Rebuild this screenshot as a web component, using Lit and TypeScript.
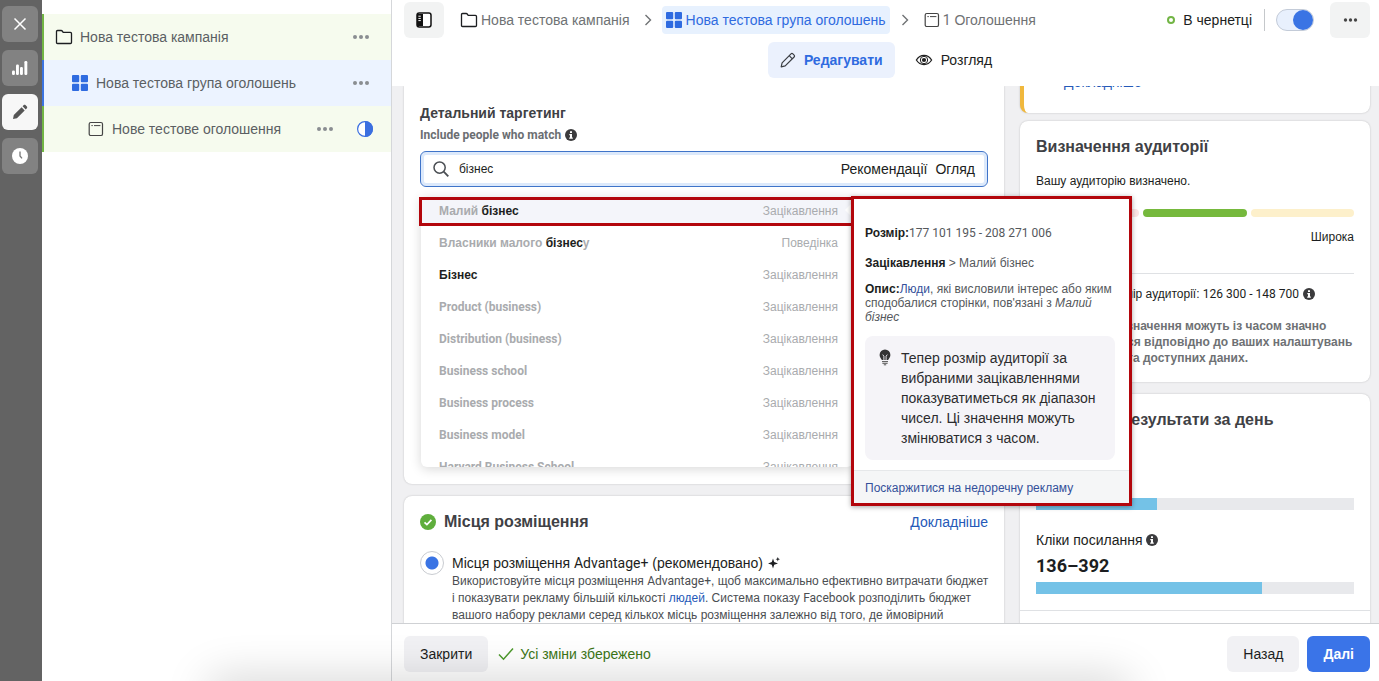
import { LitElement, html, css } from "lit";
import { customElement, state } from "lit/decorators.js";

const folder = html`<svg width="18" height="18" viewBox="0 0 18 18" fill="none" stroke="#1c1e21" stroke-width="1.3"><path d="M1.5 3.600c0-.7.4-1.100 1.100-1.100h3.500c.5 0 .8.1 1.100.5l1 1.300h7.200c.7 0 1.100.4 1.100 1.100v9c0 .7-.4 1.100-1.100 1.100H2.600c-.7 0-1.100-.4-1.100-1.100z"/></svg>`;
const grid = html`<svg width="18" height="18" viewBox="0 0 18 18" fill="#2f6be0"><rect x="1" y="1" width="7.2" height="7.2" rx="1"/><rect x="9.800" y="1" width="7.2" height="7.2" rx="1"/><rect x="1" y="9.800" width="7.2" height="7.2" rx="1"/><rect x="9.800" y="9.800" width="7.2" height="7.2" rx="1"/></svg>`;
const adIcon = html`<svg width="16" height="16" viewBox="0 0 16 16" fill="none" stroke="#444"><rect x="1.2" y="1.5" width="13.3" height="13" rx="1.6" stroke-width="1.2"/><path d="M3.400 4.600h1.400M6 4.600h6.400" stroke-width="1"/></svg>`;
const dots = (c: string, s = 18) => html`<svg width=${s} height="6" viewBox="0 0 18 6" fill=${c}><circle cx="3" cy="3" r="2"/><circle cx="9" cy="3" r="2"/><circle cx="15" cy="3" r="2"/></svg>`;
const info = html`<svg width="12" height="12" viewBox="0 0 12 12"><circle cx="6" cy="6" r="6" fill="#3b3b3d"/><path d="M5 2.2h2v1.7H5zM4.3 5H7v3.6h.8v1.2H4.2V8.6H5V6.2h-.7z" fill="#fff"/></svg>`;
const chevron = html`<svg width="8" height="12" viewBox="0 0 8 12" fill="none" stroke="#6f7274" stroke-width="1.4"><path d="M1.5 1l5 5-5 5"/></svg>`;

type Part = [text: string, hit: boolean];
const SUGGESTIONS: { parts: Part[]; kind: string }[] = [
  { parts: [["Малий ", false], ["бізнес", true]], kind: "Зацікавлення" },
  { parts: [["Власники малого ", false], ["бізнес", true], ["у", false]], kind: "Поведінка" },
  { parts: [["Бізнес", true]], kind: "Зацікавлення" },
  { parts: [["Product (business)", false]], kind: "Зацікавлення" },
  { parts: [["Distribution (business)", false]], kind: "Зацікавлення" },
  { parts: [["Business school", false]], kind: "Зацікавлення" },
  { parts: [["Business process", false]], kind: "Зацікавлення" },
  { parts: [["Business model", false]], kind: "Зацікавлення" },
  { parts: [["Harvard Business School", false]], kind: "Зацікавлення" },
];

@customElement("app-root")
export class AppRoot extends LitElement {
  @state() query = "бізнес";

  static styles = css`
    :host {
      display: grid;
      grid-template-columns: 42px 350px minmax(0, 1fr);
      grid-template-rows: minmax(0, 1fr);
      height: 100vh;
      overflow: hidden;
      position: relative;
      background: #fff;
      color: #1c1e21;
      font: 14px/20px "Liberation Sans", Arial, sans-serif;
    }
    *, *::before { box-sizing: border-box; }
    svg { display: block; flex: none; }
    button, input { font: inherit; color: inherit; border: 0; margin: 0; padding: 0; background: none; }
    h2, h3, p, ul { margin: 0; padding: 0; font: inherit; }
    a { color: #2559b8; text-decoration: none; }
    .latin { font-family: Roboto, "Liberation Sans", sans-serif; }

    .rail { background: #636363; padding: 6px 4px 6px 2px; display: flex; flex-direction: column; gap: 8px; }
    .rail button { height: 36px; border-radius: 6px; background: #828282; display: grid; place-items: center; }
    .rail button.on { background: #f7f7f7; }

    .tree { border-right: 1px solid #d5d7da; padding-top: 14px; color: #5b5f63; }
    .node { height: 46px; display: flex; align-items: center; gap: 7px; padding: 0 21px 0 11px; background: #f6fbee; border-left: 2px solid #72b545; }
    .node.group { background: #ecf3ff; border-left-color: #3b73e0; padding-left: 27px; }
    .node.ad { padding-left: 44px; padding-right: 17px; gap: 8px; }
    .node span { flex: 1; white-space: nowrap; }
    .node button + svg { margin-left: 14px; }

    .main { display: grid; grid-template-rows: 86px minmax(0, 1fr) 58px; min-width: 0; }
    .top { padding: 2px 9px 0 12px; }
    .crumbs { height: 36px; display: flex; align-items: center; color: #6f7274; white-space: nowrap; }
    .square { width: 40px; height: 36px; border-radius: 6px; background: #f2f3f3; display: grid; place-items: center; margin-right: 16px; }
    .crumbs .square.more { margin: 0 0 0 16px; }
    .crumb { display: flex; align-items: center; gap: 3px; height: 28px; }
    .crumb.now { background: #e7f1fe; color: #2f6be0; border-radius: 4px; padding: 0 4px 0 3px; }
    .sep { margin: 0 10px 0 14px; }
    .sep.last { margin: 0 15px 0 11px; }
    .state { margin-left: auto; display: flex; align-items: center; gap: 8px; color: #1c1e21; }
    .state::before { content: ""; width: 8px; height: 8px; border: 2px solid #72b545; border-radius: 50%; }
    .rule { width: 1px; height: 22px; background: #c5c8cb; margin: 0 11px 0 12px; }
    .toggle { appearance: none; width: 38px; height: 22px; border: 1px solid #c3cbd8; border-radius: 11px; background: #e8f0fd; display: flex; justify-content: flex-end; align-items: center; }
    .toggle::before { content: ""; width: 20px; height: 20px; border-radius: 50%; background: #3a74e4; }
    .tabs { display: flex; justify-content: center; gap: 8px; margin-top: 4px; padding-right: 2px; }
    .tabs button { height: 36px; display: flex; align-items: center; gap: 8px; border-radius: 6px; padding: 0 12px; }
    .tabs .on { background: #ebf1fd; color: #2f6be0; font-weight: bold; }

    .body { background: #f0f0f2; overflow: hidden; display: grid; grid-template-columns: minmax(0, 1fr) 350px; gap: 16px; padding: 0 9px 0 12px; align-items: start; }
    .col { display: flex; flex-direction: column; gap: 12px; }
    .forms { position: relative; z-index: 1; }
    .side { gap: 8px; margin-top: -32px; }
    .card { background: #fff; border-radius: 8px; box-shadow: 0 0 2px rgba(0, 0, 0, .22); padding: 16px; }
    .targeting { border-radius: 0 0 8px 8px; padding-top: 17px; height: 398px; }
    .targeting h3 { font-weight: bold; color: #3f4145; }
    .include { font-size: 12px; line-height: 16px; font-weight: bold; color: #6b6e72; display: flex; align-items: center; gap: 4px; margin: 4px 0 8px; }
    .search { position: relative; }
    .field { height: 36px; border: 1px solid #3f74c9; border-radius: 6px; box-shadow: inset 0 0 0 3px #dce9fb; display: flex; align-items: center; padding: 0 12px; gap: 8px; }
    .field input { flex: 1; min-width: 0; height: 28px; outline: 0; font-size: 12px; margin-left: 2px; }

    .menu { position: absolute; top: 46px; left: 1px; right: 135px; height: 270px; background: #fff; border-radius: 0 0 6px 6px; box-shadow: 0 2px 12px rgba(0, 0, 0, .16); }
    .menu ul { list-style: none; height: 100%; overflow: hidden; border-radius: 0 0 6px 6px; font-size: 12px; color: #a9abae; padding: 1px 0; }
    .menu li { display: flex; justify-content: space-between; height: 32px; padding: 3px 15px 0 18px; }
    .menu li:first-child { background: linear-gradient(#f4f5fa 28px, #fff 28px); position: relative; }
    .menu li:first-child::after { content: ""; position: absolute; right: 2px; top: 6px; border: 6px solid transparent; border-right-color: #fff; border-left-width: 0; }
    .menu .name { font-weight: bold; white-space: pre; }
    .menu .hit { color: #1c1e21; }
    .frame { position: absolute; top: 0; left: -2px; right: -1px; height: 29px; border: 3px solid #b3060c; pointer-events: none; }

    .tip { position: absolute; top: -1px; left: calc(100% - 2px); width: 281px; border: 3px solid #b3060c; background: #fff; font-size: 12px; line-height: 14px; color: #55585c; box-shadow: 0 1px 5px rgba(0, 0, 0, .35); }
    .facts { padding: 27px 14px 10px 11px; display: flex; flex-direction: column; gap: 16px; }
    .facts b { color: #1c1e21; }
    .facts .desc { margin: -4px -8px 0 0; }
    .facts .note { margin: -4px 0 0; }
    .tip a { color: #34509a; }
    .note { display: flex; gap: 10px; background: #f5f4f8; border-radius: 8px; padding: 12px 8px 12px 14px; font-size: 14px; line-height: 20px; color: #2c2c2e; }
    .report { background: #f5f6f7; border-top: 1px solid #e6e8ea; padding: 10px 11px 8px; }

    .title { font-size: 16px; font-weight: bold; color: #3f4145; }
    .head { display: flex; align-items: center; gap: 8px; }
    .head a { margin-left: auto; }
    .choice { display: flex; gap: 8px; margin-top: 21px; font-size: 12px; line-height: 17px; color: #4b4e52; }
    .choice input { appearance: none; width: 24px; height: 24px; flex: none; margin-top: -2px; border: 1px solid #c9ccd1; border-radius: 50%; background: radial-gradient(circle, #3a74e4 6px, transparent 7px); }
    .choice label { font-size: 14px; line-height: 20px; color: #1c1e21; display: flex; align-items: center; gap: 5px; }
    .choice p { white-space: nowrap; }

    .notice { border-left: 4px solid #f0b83d; padding: 18px 16px 21px 40px; }
    .audience { font-size: 12px; height: 261px; margin-bottom: 4px; }
    .audience .ok { margin: 14px 0 18px; }
    .meter { display: grid; grid-template-columns: repeat(3, 1fr); gap: 4px; }
    .meter i { height: 8px; border-radius: 4px; background: #fbe4e4; }
    .meter .mid { background: #76b93d; }
    .meter .wide { background: #fdf0cb; }
    .scale { text-align: right; margin-top: 10px; padding-bottom: 26px; border-bottom: 1px solid #dfe1e4; }
    .size { display: flex; align-items: center; justify-content: flex-end; gap: 4px; margin-top: 10px; padding-right: 39px; }
    .caution { font-weight: bold; line-height: 16px; color: #6e7174; margin-top: 14px; padding-left: 91px; white-space: nowrap; }
    .results { padding-bottom: 60px; }
    .results .title { padding-left: 85px; }
    .bar { height: 12px; background: #e8e9ec; margin-top: 68px; }
    .bar i { display: block; height: 100%; background: #74c2e7; }
    .metric { display: flex; align-items: center; gap: 4px; margin-top: 20px; }
    .value { font: bold 18px/24px Roboto, "Liberation Sans", sans-serif; margin-top: 4px; }
    .value + .bar { margin-top: 4px; }
    .results hr { border: 0; border-top: 1px solid #dfe1e4; margin: 16px -16px 0; }

    .foot { border-top: 1px solid #cfd1d4; display: flex; align-items: center; gap: 8px; padding: 2px 9px 0 12px; background: #fff; }
    .btn { height: 36px; padding: 0 16px; border-radius: 6px; background: #f1f1f4; }
    .btn.primary { background: #3a74e8; color: #fff; font-weight: bold; }
    .saved { display: flex; align-items: center; gap: 6px; margin: 0 auto 0 2px; color: #3c7617; }
    .glow { position: absolute; left: 16%; right: 19%; bottom: -20px; height: 10px; border-radius: 5px; box-shadow: 0 0 44px 14px rgba(0, 0, 0, .17); pointer-events: none; z-index: 2; }
  `;

  render() {
    return html`
      <nav class="rail">
        <button aria-label="Закрити панель"><svg width="14" height="14" viewBox="0 0 14 14" stroke="#fff" stroke-width="1.5"><path d="M1.500 1.500l11 11M12.500 1.500l-11 11"/></svg></button>
        <button aria-label="Статистика"><svg width="16" height="16" viewBox="0 0 16 16" fill="#fff"><rect y="10.5" width="2.9" height="4.5" rx="1.2"/><rect x="4" y="4.6" width="2.9" height="10.4" rx="1.2"/><rect x="8" y="7" width="2.9" height="8" rx="1.2"/><rect x="12.4" y="1" width="2.9" height="14" rx="1.2"/></svg></button>
        <button class="on" aria-label="Редактор"><svg width="16" height="16" viewBox="0 0 16 16" fill="#555"><path d="M1 15l.8-3.9L9.6 3.3l3.1 3.1-7.8 7.8zM10.6 2.3l1.2-1.2c.5-.5 1.1-.5 1.6 0l1.5 1.5c.5.5.5 1.1 0 1.6l-1.2 1.2z"/></svg></button>
        <button aria-label="Історія"><svg width="16" height="16" viewBox="0 0 16 16"><circle cx="8" cy="8" r="8" fill="#fff"/><path d="M8 3.6V8l2 2.4" fill="none" stroke="#777" stroke-width="1.3"/></svg></button>
      </nav>

      <aside class="tree">
        <div class="node">${folder}<span>Нова тестова кампанія</span><button aria-label="Більше">${dots("#8a8d91")}</button></div>
        <div class="node group">${grid}<span>Нова тестова група оголошень</span><button aria-label="Більше">${dots("#8a8d91")}</button></div>
        <div class="node ad">${adIcon}<span>Нове тестове оголошення</span><button aria-label="Більше">${dots("#8a8d91")}</button>
          <svg width="18" height="18" viewBox="0 0 18 18"><circle cx="9" cy="9" r="7.4" fill="#fff" stroke="#3b6fe0" stroke-width="1.2"/><path d="M9 1a8 8 0 010 16z" fill="#3b6fe0"/></svg></div>
      </aside>

      <main class="main">
        <header class="top">
          <div class="crumbs">
            <button class="square" aria-label="Панель"><svg width="16" height="16" viewBox="0 0 16 16"><rect x="1" y="1" width="14" height="14" rx="2.2" fill="#fff" stroke="#111" stroke-width="1.5"/><path d="M1 2h6v12H1z" fill="#111"/><path d="M2.400 4.200h2.400M2.400 6.400h2.400M2.400 8.600h2.400" stroke="#fff"/></svg></button>
            <span class="crumb">${folder}Нова тестова кампанія</span>
            <span class="sep">${chevron}</span>
            <span class="crumb now">${grid}Нова тестова група оголошень</span>
            <span class="sep last">${chevron}</span>
            <span class="crumb">${adIcon}<span><span class="latin">1</span> Оголошення</span></span>
            <span class="state">В чернетці</span>
            <span class="rule"></span>
            <input class="toggle" type="checkbox" checked aria-label="Стан групи оголошень" />
            <button class="square more" aria-label="Більше">${dots("#444", 15)}</button>
          </div>
          <div class="tabs">
            <button class="on"><svg width="16" height="16" viewBox="0 0 16 16" fill="none" stroke="#3a3d42" stroke-width="1.2" stroke-linejoin="round"><path d="M1.2 14.8l.9-4L11 1.9c.6-.6 1.3-.6 1.9 0l1.2 1.2c.6.6.6 1.3 0 1.9l-8.9 8.9zM9.2 3.7l3.1 3.1"/></svg><span>Редагувати</span></button>
            <button><svg width="18" height="16" viewBox="0 0 18 16" fill="none" stroke="#222" stroke-width="1.3"><path d="M1.400 8C3.300 4.900 5.800 3.400 9 3.400s5.700 1.500 7.600 4.600c-1.900 3.100-4.400 4.600-7.600 4.600S3.300 11.100 1.400 8z"/><circle cx="9" cy="8" r="3.700" stroke-width="1"/><circle cx="9" cy="8" r="2.100" fill="#222" stroke="none"/></svg><span>Розгляд</span></button>
          </div>
        </header>

        <div class="body">
          <div class="col forms">
            <section class="card targeting">
              <h3>Детальний таргетинг</h3>
              <div class="include latin">Include people who match ${info}</div>
              <div class="search">
                <div class="field">
                  <svg width="16" height="16" viewBox="0 0 16 16" fill="none" stroke="#4b4f54" stroke-width="1.5"><circle cx="6.600" cy="6.600" r="5.600"/><path d="M10.700 10.700l4.600 4.600" stroke-width="1.900"/></svg>
                  <input type="text" aria-label="Детальний таргетинг" .value=${this.query} @input=${(e: Event) => (this.query = (e.target as HTMLInputElement).value)} />
                  <button>Рекомендації</button>
                  <button>Огляд</button>
                </div>
                <div class="menu">
                  <ul>
                    ${SUGGESTIONS.map((s) => html`<li><span class="name">${s.parts.map(([t, hit]) => html`<span class="${hit ? "hit" : ""} ${/[A-Za-z]/.test(t) ? "latin" : ""}">${t}</span>`)}</span><span>${s.kind}</span></li>`)}
                  </ul>
                  <div class="frame"></div>
                  <div class="tip">
                    <div class="facts">
                      <p><b>Розмір:</b><span class="latin">177 101 195 - 208 271 006</span></p>
                      <p><b>Зацікавлення</b> &gt; Малий бізнес</p>
                      <p class="desc"><b>Опис:</b><a href="#">Люди</a>, які висловили інтерес або яким сподобалися сторінки, пов'язані з <em>Малий бізнес</em></p>
                      <div class="note"><svg width="12" height="18" viewBox="0 0 12 18"><path d="M6 1.500a5.400 5.400 0 015.400 5.400c0 2.300-1.500 3.400-2.300 5.100H2.900C2.100 10.300.6 9.200.6 6.900A5.400 5.400 0 016 1.500z" fill="#333"/><path d="M4.900 12V8.200L3.700 6.600M7.100 12V8.200l1.200-1.600" fill="none" stroke="#f5f4f8" stroke-width=".9"/><path d="M3 13.600h6M3.400 15.300h5.200M4.800 16.800h2.400" stroke="#555"/></svg><span>Тепер розмір аудиторії за вибраними зацікавленнями показуватиметься як діапазон чисел. Ці значення можуть змінюватися з часом.</span></div>
                    </div>
                    <div class="report"><a href="#">Поскаржитися на недоречну рекламу</a></div>
                  </div>
                </div>
              </div>
            </section>

            <section class="card">
              <div class="head">
                <svg width="16" height="16" viewBox="0 0 16 16"><circle cx="8" cy="8" r="8" fill="#5fae3c"/><path d="M4.500 8.300l2.400 2.300 4.500-4.800" fill="none" stroke="#fff" stroke-width="1.700"/></svg>
                <h2 class="title">Місця розміщення</h2><a href="#">Докладніше</a>
              </div>
              <div class="choice">
                <input type="radio" id="auto" checked />
                <div>
                  <label for="auto"><span>Місця розміщення <span class="latin">Advantage+</span> (рекомендовано)</span><svg width="12" height="12" viewBox="0 0 12 12" fill="#1c1e21"><path d="M5 1.500l1.200 3.600L10 6.500 6.200 7.800 5 11.500 3.800 7.800 0 6.500l3.800-1.400zM9.800 0l.6 1.600 1.600.6-1.600.6-.6 1.600-.6-1.600-1.600-.6 1.600-.6z"/></svg></label>
                  <p>Використовуйте місця розміщення <span class="latin">Advantage+</span>, щоб максимально ефективно витрачати бюджет<br />і показувати рекламу більшій кількості <a href="#">людей</a>. Система показу <span class="latin">Facebook</span> розподілить бюджет<br />вашого набору реклами серед кількох місць розміщення залежно від того, де ймовірний</p>
                </div>
              </div>
            </section>
          </div>

          <div class="col side">
            <section class="card notice"><a href="#">Докладніше</a></section>
            <section class="card audience">
              <h2 class="title">Визначення аудиторії</h2>
              <p class="ok">Вашу аудиторію визначено.</p>
              <div class="meter"><i></i><i class="mid"></i><i class="wide"></i></div>
              <p class="scale">Широка</p>
              <p class="size"><span>Розмір аудиторії: <span class="latin">126 300 - 148 700</span></span>${info}</p>
              <p class="caution">значення можуть із часом значно<br />ся відповідно до ваших налаштувань<br />та доступних даних.</p>
            </section>
            <section class="card results">
              <h2 class="title">Результати за день</h2>
              <div class="bar"><i style="width:38%"></i></div>
              <p class="metric">Кліки посилання ${info}</p>
              <p class="value">136–392</p>
              <div class="bar"><i style="width:71%"></i></div>
              <hr />
            </section>
          </div>
        </div>

        <footer class="foot">
          <button class="btn">Закрити</button>
          <span class="saved"><svg width="16" height="14" viewBox="0 0 16 14" fill="none" stroke="#4d9a2c" stroke-width="1.500"><path d="M1 7.500l4.500 4.700L15 1.500"/></svg>Усі зміни збережено</span>
          <button class="btn">Назад</button>
          <button class="btn primary">Далі</button>
        </footer>
      </main>
      <div class="glow"></div>
    `;
  }
}
